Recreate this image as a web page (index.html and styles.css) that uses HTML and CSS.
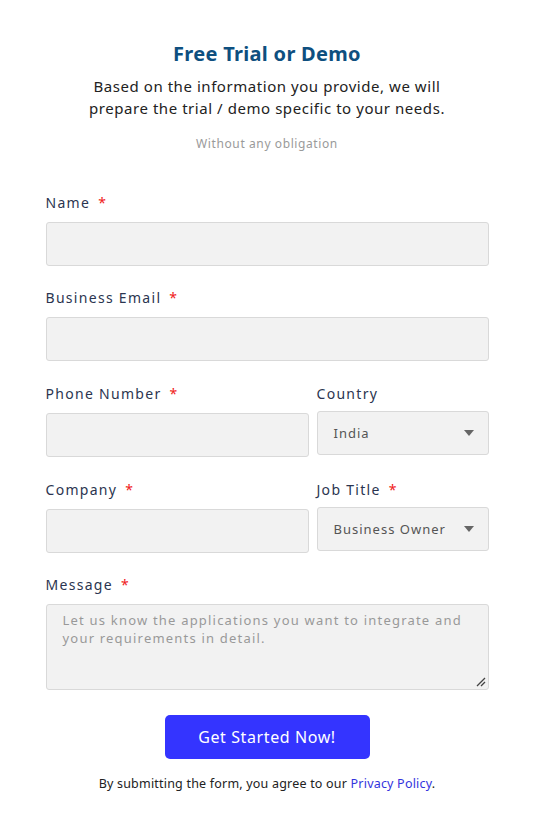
FILE: index.html
```html
<!DOCTYPE html>
<html lang="en">
<head>
<meta charset="utf-8">
<title>Free Trial or Demo</title>
<link rel="stylesheet" href="styles.css">
</head>
<body>
<div class="wrap">
  <header class="head">
    <h1 class="title">Free Trial or Demo</h1>
    <p class="lead">Based on the information you provide, we will<br>prepare the trial / demo specific to your needs.</p>
    <p class="note">Without any obligation</p>
  </header>
  <form class="form">
    <div class="field">
      <label class="label">Name <span class="req">*</span></label>
      <div class="input"></div>
    </div>
    <div class="field">
      <label class="label">Business Email <span class="req">*</span></label>
      <div class="input"></div>
    </div>
    <div class="row">
      <div class="field">
        <label class="label">Phone Number <span class="req">*</span></label>
        <div class="input"></div>
      </div>
      <div class="field side">
        <label class="label">Country</label>
        <div class="input select"><span>India</span><span class="caret"></span></div>
      </div>
    </div>
    <div class="row">
      <div class="field">
        <label class="label">Company <span class="req">*</span></label>
        <div class="input"></div>
      </div>
      <div class="field side">
        <label class="label">Job Title <span class="req">*</span></label>
        <div class="input select"><span>Business Owner</span><span class="caret"></span></div>
      </div>
    </div>
    <div class="field">
      <label class="label">Message <span class="req">*</span></label>
      <div class="input textarea">
        <span class="ph">Let us know the applications you want to integrate and your requirements in detail.</span>
        <svg class="grip" width="12" height="12" viewBox="0 0 12 12"><path d="M11 3 L3 11 M11 7 L7 11" stroke="#444" stroke-width="1.3" fill="none"/></svg>
      </div>
    </div>
    <div class="actions">
      <button type="button" class="btn">Get Started Now!</button>
    </div>
    <p class="foot">By submitting the form, you agree to our <a class="link">Privacy Policy</a>.</p>
  </form>
</div>
</body>
</html>
```
FILE: styles.css
```css
* { box-sizing: border-box; }
body {
  margin: 0;
  background: #fff;
  font-family: "Noto Sans", "DejaVu Sans", sans-serif;
}
.wrap {
  width: 443px;
  margin: 0 auto;
  padding-top: 39px;
}
.head { text-align: center; }
.title {
  margin: 0;
  font-family: "Noto Sans", sans-serif;
  font-size: 20px;
  font-weight: 700;
  color: #0e4f7f;
  line-height: 30px;
  letter-spacing: 0.3px;
}
.lead {
  margin: 6px 0 0;
  font-family: "Noto Sans", sans-serif;
  font-size: 15px;
  line-height: 22px;
  color: #222;
  letter-spacing: 0.55px;
}
.note {
  margin: 17px 0 0;
  font-size: 12px;
  color: #9a9a9a;
  letter-spacing: 0.6px;
  line-height: 16px;
}
.form {
  margin-top: 41px;
  display: flex;
  flex-direction: column;
}
.field {
  display: flex;
  flex-direction: column;
  flex: 1;
  margin-bottom: 22px;
}
.label {
  font-size: 14px;
  color: #2b3550;
  letter-spacing: 1.3px;
  line-height: 20px;
  margin-bottom: 9px;
  font-weight: 400;
}
.req { color: #f02020; margin-left: 3px; }
.input {
  height: 44px;
  background: #f2f2f2;
  border: 1px solid #d9d9d9;
  border-radius: 3px;
}
.row {
  display: flex;
  gap: 8px;
  margin-top: 1px;
}
.row .field { flex: 0 0 263px; }
.row .field.side { flex: 0 0 172px; }
.side .label { margin-bottom: 7px; }
.select {
  display: flex;
  align-items: center;
  justify-content: space-between;
  padding: 0 14px 0 16px;
  font-size: 13px;
  color: #555;
  letter-spacing: 1px;
}
.caret {
  width: 0; height: 0;
  border-left: 5px solid transparent;
  border-right: 5px solid transparent;
  border-top: 6px solid #666;
}
.textarea {
  height: 86px;
  position: relative;
  padding: 6px 16px;
  font-size: 13px;
  line-height: 18px;
  color: #999;
  letter-spacing: 1.2px;
}
.grip { position: absolute; right: 2px; bottom: 2px; }
.actions {
  display: flex;
  justify-content: center;
  margin-top: 3px;
}
.btn {
  width: 205px;
  height: 44px;
  border: none;
  border-radius: 5px;
  background: #3434ff;
  color: #fff;
  font-family: "Noto Sans", sans-serif;
  font-size: 16px;
  letter-spacing: 0.6px;
  cursor: pointer;
}
.foot {
  margin: 16px 0 0;
  text-align: center;
  font-size: 12.5px;
  line-height: 17px;
  color: #222;
  letter-spacing: 0.2px;
}
.link { color: #3333dd; }
```
